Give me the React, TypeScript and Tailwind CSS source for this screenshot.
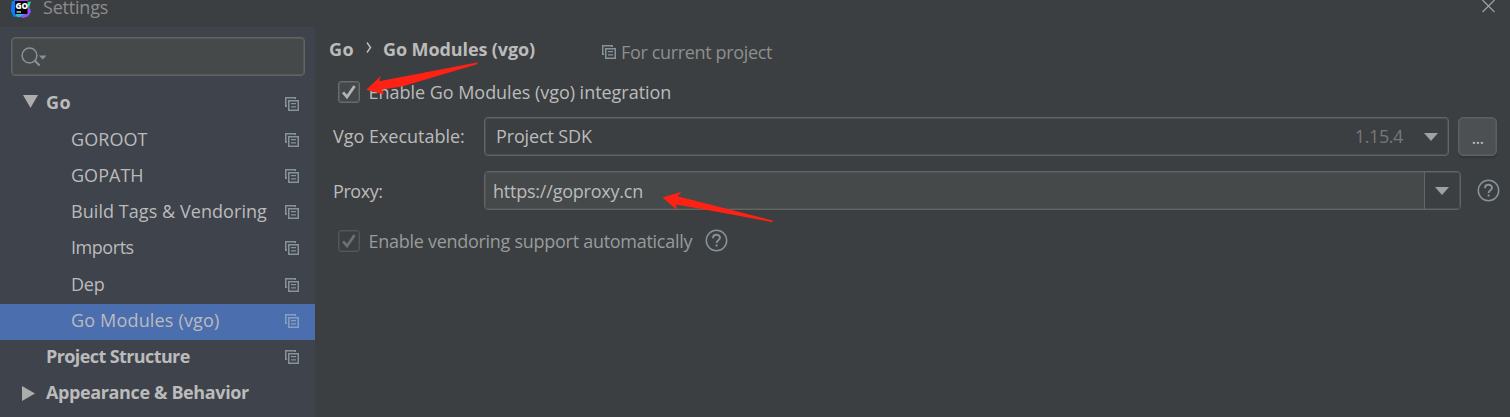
import type { ReactNode } from "react";

type TreeItem = {
  label: string;
  bold?: boolean;
  arrow?: "down" | "right";
  scoped?: boolean;
  selected?: boolean;
  tracking: string;
};

const TREE: TreeItem[] = [
  { label: "Go", bold: true, arrow: "down", scoped: true, tracking: "tracking-[0.5px]" },
  { label: "GOROOT", scoped: true, tracking: "tracking-[0.06px]" },
  { label: "GOPATH", scoped: true, tracking: "tracking-[0.03px]" },
  { label: "Build Tags & Vendoring", scoped: true, tracking: "tracking-[0.06px]" },
  { label: "Imports", scoped: true, tracking: "tracking-[-0.45px]" },
  { label: "Dep", scoped: true, tracking: "tracking-[-0.2px]" },
  { label: "Go Modules (vgo)", scoped: true, selected: true, tracking: "tracking-[0.17px]" },
  { label: "Project Structure", bold: true, scoped: true, tracking: "tracking-[-0.6px]" },
  { label: "Appearance & Behavior", bold: true, arrow: "right", tracking: "tracking-[-0.38px]" },
];

function ScopeIcon({ selected = false }: { selected?: boolean }) {
  return (
    <svg width="14" height="14" viewBox="0 0 14 14" className={selected ? "shrink-0 text-[#879fbf]" : "shrink-0 text-[#87939a]"} fill="currentColor">
      <path d="M0 0H11V2H9.5V1.5H1.5V8.5H2V10H0Z" />
      <path fillRule="evenodd" d="M3 3H14V14H3Z M4.5 4.5V12.5H12.5V4.5Z" />
      <path d="M6 6H11V7.3H6Z M6 9.3H11V10.6H6Z" />
    </svg>
  );
}

function HelpIcon() {
  return (
    <svg width="23" height="23" viewBox="0 0 23 23" className="shrink-0 text-[#87939a]" fill="none" stroke="currentColor">
      <circle cx="11.5" cy="11.5" r="10.2" strokeWidth="1.5" />
      <path d="M8 9.2C8 7 9.4 5.8 11.5 5.8S15 7 15 8.8C15 11.1 11.6 11.3 11.6 14" strokeWidth="1.9" />
      <path d="M11.6 15.5V17.5" strokeWidth="2" />
    </svg>
  );
}

function Checkbox({ disabled = false }: { disabled?: boolean }) {
  return (
    <span className={disabled ? "flex size-[22px] shrink-0 rounded-[3px] border border-[#555657] text-[#6d6f70] shadow-[inset_0_0_0_1px_#464849]" : "flex size-[22px] shrink-0 rounded-[3px] border border-[#6b6b6b] bg-[#43494a] text-[#b4b4b4] shadow-[inset_0_0_0_1px_#54585a]"}>
      <svg width="20" height="20" viewBox="0 0 20 20" fill="none" stroke="currentColor" strokeWidth="2.8">
        <path d="M4 10.3L8 15L15.6 4" />
      </svg>
    </span>
  );
}

function DownArrow() {
  return (
    <svg width="14" height="8" viewBox="0 0 14 8" className="shrink-0" fill="#9fa2a5">
      <path d="M0 0H14L7 8Z" />
    </svg>
  );
}

function Text({ children, className }: { children: ReactNode; className: string }) {
  return <span className={`block whitespace-pre ${className}`}>{children}</span>;
}

function Logo() {
  return (
    <svg width="21" height="18" viewBox="0 0 21 18" className="shrink-0">
      <defs>
        <linearGradient id="edge" x1="0" y1="0" x2="1" y2="0.2">
          <stop offset="0.1" stopColor="#0a84f5" />
          <stop offset="0.45" stopColor="#a74df5" />
          <stop offset="1" stopColor="#8852f0" />
        </linearGradient>
      </defs>
      <path d="M0.5 2L4 0H17L18.5 7L20 12L17 16.5L12 18L7.5 16L3 16.5L0.5 12Z" fill="url(#edge)" />
      <path d="M1 3L5 2V14L9 15L7 17L2.5 16.5L0 11Z" fill="#087cfa" />
      <path d="M5 14H13L8 17.5L5 16Z" fill="#25b9df" />
      <path d="M15 3L20 1.5L18.5 6L16 8Z" fill="#1ae889" />
      <path d="M4 1H16.5V14H4Z" fill="#050505" />
      <path d="M5.5 11.3H10V12.6H5.5Z" fill="#ddd" />
      <text x="4.4" y="8.8" fontFamily="Open Sans, sans-serif" fontSize="8.2" fontWeight="800" fill="#fff">GO</text>
    </svg>
  );
}

function TreeRow({ item }: { item: TreeItem }) {
  return (
    <div className={`flex h-[36.2px] items-center pr-4 ${item.selected ? "bg-[#4b6eaf]" : ""}`}>
      <div className={`flex shrink-0 items-center ${item.bold ? "w-[46px]" : "w-[71px]"}`}>
        {item.arrow === "down" && (
          <svg width="15" height="13" viewBox="0 0 15 13" className="mb-[7px] ml-[22.5px]" fill="#adadad"><path d="M0 0H15L7.5 13Z" /></svg>
        )}
        {item.arrow === "right" && (
          <svg width="13" height="15" viewBox="0 0 13 15" className="mb-[1px] ml-[22px]" fill="#adadad"><path d="M0 0V15L13 7.5Z" /></svg>
        )}
      </div>
      <Text className={`grow leading-6 ${item.arrow === "down" ? "pb-[6px]" : "pb-1"} ${item.bold ? "font-bold" : ""} ${item.tracking}`}>{item.label}</Text>
      {item.scoped && <div className="pb-0.5"><ScopeIcon selected={item.selected} /></div>}
    </div>
  );
}

function Sidebar() {
  return (
    <aside className="flex w-[315px] shrink-0 flex-col overflow-hidden bg-[#3f434c]">
      <div className="mt-[10px] ml-[10.5px] flex h-[39px] w-[294px] shrink-0 items-center rounded-[4px] border border-[#646464] bg-[#45494a] pl-[9px] shadow-[inset_0_0_0_1px_#55585a]">
        <svg width="26" height="20" viewBox="0 0 26 20" fill="none" stroke="#87939a">
          <circle cx="8.5" cy="8.5" r="7.4" strokeWidth="1.5" />
          <path d="M13.3 13.3L18.7 18.5" strokeWidth="2.2" />
          <path d="M18 8.5H25.5L21.7 12.5Z" fill="#87939a" stroke="none" />
        </svg>
      </div>
      <nav className="mt-[10.6px] flex shrink-0 flex-col">
        {TREE.map((item) => <TreeRow key={item.label} item={item} />)}
      </nav>
    </aside>
  );
}

function Annotations() {
  return (
    <svg width="1510" height="417" viewBox="0 0 1510 417" className="pointer-events-none absolute inset-0" fill="#ff2113">
      <path d="M366.5 89.5L380.8 76L379.3 81.3L477 62.5Q478.5 62.8 477 64.2L402 86.5L381.5 89.5L384 94.5L367 90Z" />
      <path d="M662.5 197.5L681.5 191.8L677.5 196.2L772.5 220.5Q773.5 221.8 772 222L710 210.5L676 204.5L677 210Z" />
    </svg>
  );
}

export default function App() {
  return (
    <div className="relative flex h-[417px] w-[1510px] flex-col overflow-hidden bg-[#3c3f41] font-['Open_Sans',sans-serif] text-[18px] text-[#bbbbbb]">
      <header className="flex h-[27px] shrink-0 items-start pl-[11px]">
        <Logo />
        <Text className="ml-[11px] grow leading-[15px] tracking-[-0.2px] text-[#8c8d8e]">Settings</Text>
        <svg width="13" height="13" viewBox="0 0 13 13" className="mr-[15.5px]" stroke="#a0a1a2" strokeWidth="1.2"><path d="M0.5 0L12.5 12M12.5 0L0.5 12" /></svg>
      </header>
      <div className="flex min-h-0 grow">
        <Sidebar />
        <main className="flex grow flex-col">
          <div className="flex h-[54px] items-start pt-[10px] pl-[14px]">
            <Text className="w-[37px] font-bold leading-6 tracking-[0.5px]">Go</Text>
            <svg width="6" height="11" viewBox="0 0 6 11" className="mt-[5px] mr-[11px]" fill="none" stroke="#bbb" strokeWidth="1.5"><path d="M1 0.5L4.5 5.5L1 10.5" /></svg>
            <Text className="w-[219px] font-bold leading-6 tracking-[-0.1px]">Go Modules (vgo)</Text>
            <div className="mt-2"><ScopeIcon /></div>
            <Text className="mt-[3px] ml-[5px] leading-6 tracking-[-0.35px] text-[#8c8e8f]">For current project</Text>
          </div>
          <div className="flex h-9 items-start pl-[22.5px]">
            <Checkbox />
            <Text className="-mt-px ml-[9px] leading-6 tracking-[-0.03px]">Enable Go Modules (vgo) integration</Text>
          </div>
          <div className="flex h-[54px] items-start pl-[18px]">
            <Text className="mt-[7px] w-[151px] leading-6 tracking-[-0.02px]">Vgo Executable:</Text>
            <div className="flex h-[39px] w-[965px] items-center rounded-[4px] border border-[#646464] pr-[10px] pl-[11px] shadow-[inset_0_0_0_1px_#4c4f50]">
              <Text className="grow pb-[2px] leading-6 tracking-[-0.13px]">Project SDK</Text>
              <Text className="mr-[21px] pb-[2px] leading-6 tracking-[-0.4px] text-[#787878]">1.15.4</Text>
              <DownArrow />
            </div>
            <div className="ml-[9px] flex h-[39px] w-[39px] items-end justify-center rounded-[5px] border border-[#5e6060] bg-[#4c5052] pb-[8.5px] shadow-[inset_0_0_0_1px_#565959,0_2px_1px_#343739]">
              <Text className="leading-[19px] tracking-[-0.8px]">...</Text>
            </div>
          </div>
          <div className="flex h-[59px] items-start pl-[18px]">
            <Text className="mt-[8px] w-[151px] leading-6 tracking-[-0.45px]">Proxy:</Text>
            <div className="flex h-[39px] w-[977px] items-stretch rounded-[4px] border border-[#646464]">
              <div className="flex grow items-center rounded-l-[3px] bg-[#45494a] pl-[8px] shadow-[inset_0_1px_0_#505455,inset_1px_0_0_#505455,inset_0_-1px_0_#505455]">
                <Text className="leading-6 tracking-[-0.22px]">https://goproxy.cn</Text>
              </div>
              <div className="flex w-[36px] items-center rounded-r-[3px] border-l border-[#646464] pt-px pl-[10px] shadow-[inset_0_1px_0_#4c4f50,inset_-1px_0_0_#4c4f50,inset_0_-1px_0_#4c4f50]"><DownArrow /></div>
            </div>
            <div className="mt-[8px] ml-[16px]"><HelpIcon /></div>
          </div>
          <div className="flex items-start pl-[22.5px]">
            <Checkbox disabled />
            <Text className="-mt-px ml-[9px] leading-6 tracking-[-0.28px] text-[#999b9c]">Enable vendoring support automatically</Text>
            <div className="-mt-[1px] ml-[13px]"><HelpIcon /></div>
          </div>
        </main>
      </div>
      <Annotations />
    </div>
  );
}
